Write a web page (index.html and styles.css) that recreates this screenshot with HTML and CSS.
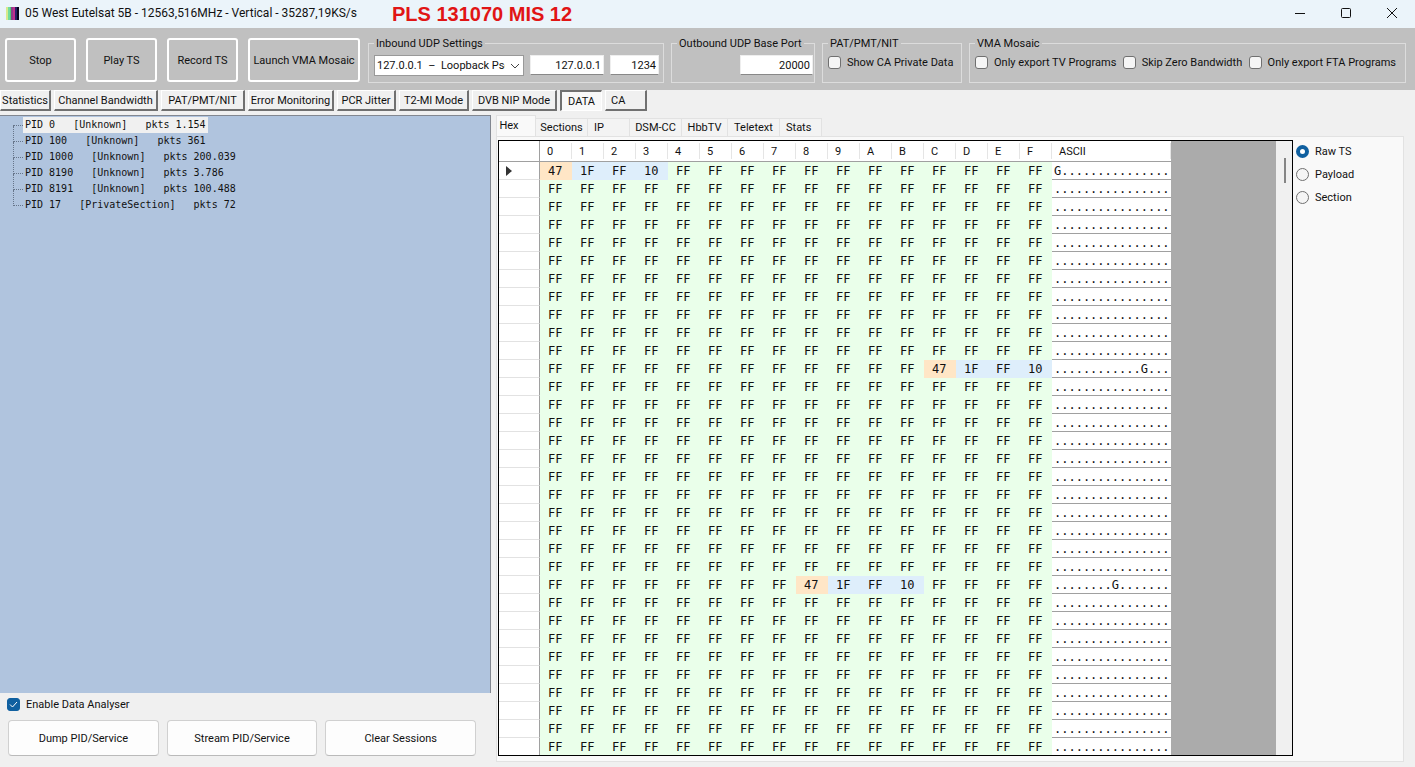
FILE: index.html
```html
<!DOCTYPE html>
<html lang="en">
<head>
<meta charset="utf-8">
<title>05 West Eutelsat 5B</title>
<link rel="stylesheet" href="styles.css">
</head>
<body>
<header class="titlebar">
  <svg class="app-icon" width="13" height="13" viewBox="0 0 13 13"><path fill="#d8ea8c" d="M0 0h2v13H0z"/><path fill="#72dc9c" d="M2 0h2v13H2z"/><path fill="#4fc878" d="M4 0h1v13H4z"/><path fill="#8a3f88" d="M5 0h2v13H5z"/><path fill="#c12c8e" d="M7 0h2v13H7z"/><path fill="#282066" d="M9 0h2v13H9z"/><path fill="#08041c" d="M11 0h2v13h-2z"/></svg>
  <span class="caption">05 West Eutelsat 5B - 12563,516MHz - Vertical - 35287,19KS/s</span>
  <strong class="note">PLS 131070 MIS 12</strong>
  <div class="window-buttons">
    <button type="button" aria-label="Minimize"><svg width="12" height="12" viewBox="0 0 12 12"><path d="M1 6.5h10"/></svg></button>
    <button type="button" aria-label="Maximize"><svg width="12" height="12" viewBox="0 0 12 12"><rect x="1.5" y="1.5" width="9" height="9" rx="1"/></svg></button>
    <button type="button" aria-label="Close"><svg width="12" height="12" viewBox="0 0 12 12"><path d="M1 1l10 10M11 1L1 11"/></svg></button>
  </div>
</header>

<div class="toolbar">
  <div class="actions">
    <button type="button">Stop</button>
    <button type="button">Play TS</button>
    <button type="button">Record TS</button>
    <button type="button" class="wide">Launch VMA Mosaic</button>
  </div>
  <fieldset class="inbound">
    <legend>Inbound UDP Settings</legend>
    <div class="fields">
      <select aria-label="Network interface"><option>127.0.0.1 &nbsp;–&nbsp; Loopback Pseudo-Interface</option></select>
      <input class="address" type="text" aria-label="Inbound address" value="127.0.0.1">
      <input class="port" type="text" aria-label="Inbound port" value="1234">
    </div>
  </fieldset>
  <fieldset class="outbound">
    <legend>Outbound UDP Base Port</legend>
    <div class="fields"><input class="base-port" type="text" aria-label="Outbound UDP base port" value="20000"></div>
  </fieldset>
  <fieldset class="tables">
    <legend>PAT/PMT/NIT</legend>
    <div class="checks"><label><input type="checkbox">Show CA Private Data</label></div>
  </fieldset>
  <fieldset class="mosaic">
    <legend>VMA Mosaic</legend>
    <div class="checks">
      <label><input type="checkbox">Only export TV Programs</label>
      <label><input type="checkbox">Skip Zero Bandwidth</label>
      <label><input type="checkbox">Only export FTA Programs</label>
    </div>
  </fieldset>
</div>

<nav class="modes">
  <button type="button" class="w-first">Statistics</button>
  <button type="button" class="w-channel">Channel Bandwidth</button>
  <button type="button" class="w-pat">PAT/PMT/NIT</button>
  <button type="button" class="w-error">Error Monitoring</button>
  <button type="button" class="w-pcr">PCR Jitter</button>
  <button type="button" class="w-t2">T2-MI Mode</button>
  <button type="button" class="w-dvb">DVB NIP Mode</button>
  <button type="button" class="w-small active">DATA</button>
  <button type="button" class="w-small left">CA</button>
</nav>

<main class="workspace">
  <section class="services">
    <ul class="tree">
      <li><span class="selected">PID 0   [Unknown]   pkts 1.154</span></li>
      <li><span>PID 100   [Unknown]   pkts 361</span></li>
      <li><span>PID 1000   [Unknown]   pkts 200.039</span></li>
      <li><span>PID 8190   [Unknown]   pkts 3.786</span></li>
      <li><span>PID 8191   [Unknown]   pkts 100.488</span></li>
      <li><span>PID 17   [PrivateSection]   pkts 72</span></li>
    </ul>
    <div class="service-footer">
      <label><input type="checkbox" checked>Enable Data Analyser</label>
      <div class="service-actions">
        <button type="button">Dump PID/Service</button>
        <button type="button">Stream PID/Service</button>
        <button type="button">Clear Sessions</button>
      </div>
    </div>
  </section>

  <section class="viewer">
    <nav class="views">
      <button type="button" class="v-hex active">Hex</button>
      <button type="button" class="v-wide">Sections</button>
      <button type="button" class="v-short">IP</button>
      <button type="button" class="v-wide">DSM-CC</button>
      <button type="button" class="v-mid">HbbTV</button>
      <button type="button" class="v-wide">Teletext</button>
      <button type="button" class="v-short">Stats</button>
    </nav>
    <div class="page">
      <div class="grid-box">
        <div class="grid-view">
          <table class="hex">
            <thead><tr id="hex-head"></tr></thead>
            <tbody id="hex-body"></tbody>
          </table>
        </div>
        <div class="scrollbar"><div class="thumb"></div></div>
      </div>
      <div class="sources">
        <label><input type="radio" name="source" checked>Raw TS</label>
        <label><input type="radio" name="source">Payload</label>
        <label><input type="radio" name="source">Section</label>
      </div>
    </div>
  </section>
</main>
<script src="app.js"></script>
</body>
</html>
```

FILE: styles.css
```css
*, *::before { box-sizing: border-box; }
body {
  margin: 0;
  height: 100vh;
  display: flex;
  flex-direction: column;
  overflow: hidden;
  background: #f0f0f0;
  color: #111;
  font: 11px/13px Roboto, "Liberation Sans", Arial, sans-serif;
}
button, input, select { font: inherit; color: inherit; margin: 0; }
button { padding: 0; white-space: nowrap; }

.titlebar {
  flex: none;
  height: 28px;
  display: flex;
  align-items: center;
  padding-left: 6px;
  background: #ebf4fa;
}
.app-icon { flex: none; margin: 0 6px 2px 0; }
.caption { width: 367px; padding-bottom: 2px; font-size: 12px; line-height: 16px; white-space: nowrap; }
.note { color: #e11515; font: bold 20px/24px "Liberation Sans", Arial, sans-serif; white-space: nowrap; }
.window-buttons { margin-left: auto; display: flex; padding-bottom: 2px; }
.window-buttons button {
  width: 46px;
  height: 24px;
  display: grid;
  place-items: center;
  border: 0;
  background: none;
}
.window-buttons svg { fill: none; stroke: #111; }

.toolbar {
  flex: none;
  height: 62px;
  display: flex;
  align-items: flex-start;
  padding: 9px 9px 0 5px;
  background: #c0c0c0;
}
.actions { display: flex; gap: 10px; padding-top: 1px; margin-right: 8px; }
.actions button {
  width: 71px;
  height: 44px;
  border: 2px solid #fff;
  border-radius: 3px;
  background: #c0c0c0;
}
.actions .wide { width: 112px; }
fieldset {
  height: 46px;
  min-width: 0;
  margin: 0 7px 0 0;
  padding: 0 4px 0 5px;
  border: 1px solid #dcdcdc;
}
legend { padding: 0 2px; white-space: nowrap; }
.inbound { width: 296px; }
.outbound { width: 144px; }
.tables { width: 140px; }
.mosaic { flex: 1; margin-right: 0; }
.fields { display: flex; justify-content: flex-end; gap: 6px; padding-top: 5px; }
.fields select {
  width: 150px;
  height: 21px;
  padding: 0 18px 0 2px;
  appearance: none;
  border: 1px solid #999;
  border-radius: 0;
  background: #fff url("data:image/svg+xml,%3Csvg xmlns='http://www.w3.org/2000/svg' width='10' height='6'%3E%3Cpath d='M1 1l4 4 4-4' fill='none' stroke='%23444'/%3E%3C/svg%3E") no-repeat right 3px center;
  text-overflow: clip;
}
.fields input {
  height: 20px;
  padding: 0 2px;
  border: 1px solid #eee;
  border-bottom-color: #888;
  background: #fff;
  text-align: right;
}
.address { width: 74px; }
.port { width: 49px; }
.base-port { width: 73px; margin-right: -3px; }
.checks { display: flex; justify-content: space-between; padding: 6px 5px 0 0; }
label { display: flex; align-items: center; gap: 6px; white-space: nowrap; }
input[type="checkbox"] {
  appearance: none;
  flex: none;
  width: 13px;
  height: 13px;
  border: 1px solid #707070;
  border-radius: 3px;
  background: #f5f5f5;
}
input[type="checkbox"]:checked {
  border-color: #1060a0;
  background: #1060a0 url("data:image/svg+xml,%3Csvg xmlns='http://www.w3.org/2000/svg' width='9' height='7'%3E%3Cpath d='M1 3.5l2.5 2.5L8 1' fill='none' stroke='white'/%3E%3C/svg%3E") no-repeat center;
}

.modes { flex: none; height: 25px; display: flex; gap: 3px; align-items: flex-start; }
.modes button {
  height: 21px;
  border: solid;
  border-width: 1px 2px 2px 1px;
  border-color: #fff #707070 #707070 #fff;
  background: #f0f0f0;
}
.modes .active { border-width: 2px 1px 1px 2px; border-color: #707070 #fff #fff #707070; background: #f8f8f8; }
.modes .left { text-align: left; padding-left: 5px; }
.w-first { width: 51px; }
.w-channel { width: 104px; }
.w-pat { width: 84px; }
.w-error { width: 86px; }
.w-pcr { width: 59px; }
.w-t2 { width: 70px; }
.w-dvb { width: 85px; }
.w-small { width: 42px; }

.workspace { flex: 1; min-height: 0; display: flex; }
.services { flex: none; width: 491px; display: flex; flex-direction: column; }
.tree {
  flex: 1;
  margin: 0;
  padding: 1px 0 0 13px;
  list-style: none;
  border: solid #828790;
  border-width: 1px 1px 0 0;
  background: #b0c4de;
  font: 10px/16px "DejaVu Sans Mono", monospace;
}
.tree li { display: flex; height: 16px; }
.tree li::before {
  content: "";
  width: 10px;
  height: 9px;
  border-bottom: 1px dotted #66758a;
}
.tree li + li::before { height: 16px; margin-top: -7px; border-left: 1px dotted #66758a; }
.tree span { padding: 0 2px; white-space: pre; }
.tree .selected { background: #f0f0f0; }
.service-footer { padding: 5px 15px 11px 7px; }
.service-actions { display: flex; gap: 8px; padding: 9px 0 0 1px; }
.service-actions button {
  flex: 1;
  height: 36px;
  border: 1px solid #d0d0d0;
  border-bottom-color: #bababa;
  border-radius: 4px;
  background: #fdfdfd;
}

.viewer { flex: 1; min-width: 0; display: flex; flex-direction: column; padding: 0 11px 5px 5px; }
.views { flex: none; height: 21px; display: flex; align-items: flex-end; }
.views button {
  height: 18px;
  border: solid #e2e2e2;
  border-width: 1px 1px 0 0;
  background: #f3f3f3;
}
.views .active { height: 21px; padding: 0 14px 2px 0; border-left-width: 1px; background: #f9f9f9; }
.v-hex { width: 40px; }
.v-wide { width: 52px; }
.v-mid { width: 46px; }
.views .v-short { width: 42px; text-align: left; padding-left: 6px; }
.page {
  flex: 1;
  min-height: 0;
  display: flex;
  padding: 3px 0 5px 1px;
  border: 1px solid #e2e2e2;
  background: #f9f9f9;
}
.grid-box { flex: 1; min-width: 0; display: flex; border: 1px solid #000; }
.grid-view { flex: 1; min-width: 0; overflow: hidden; background: #ababab; }
.scrollbar { flex: none; width: 16px; padding: 17px 6px 0 8px; background: #f0f0f0; }
.thumb { height: 25px; background: #858585; }
.sources { flex: none; width: 110px; display: flex; flex-direction: column; gap: 10px; padding: 5px 0 0 3px; }
input[type="radio"] {
  appearance: none;
  flex: none;
  width: 13px;
  height: 13px;
  border: 1px solid #707070;
  border-radius: 50%;
  background: #f5f5f5;
}
input[type="radio"]:checked { border: 4px solid #1060a0; background: #fff; }

.hex { table-layout: fixed; width: 672px; border-collapse: separate; border-spacing: 0; background: #fff; }
.hex th, .hex td { height: 18px; padding: 0; font-weight: normal; text-align: left; }
.hex thead th {
  height: 21px;
  padding-left: 7px;
  border-bottom: 1px solid #a0a0a0;
  background: linear-gradient(#e5e5e5, #e5e5e5) right 0 center / 1px 16px no-repeat;
}
.hex .row-head { width: 41px; border-right: 1px solid #a0a0a0; background: #fff; }
.hex tbody .row-head { border-bottom: 1px solid #e2e2e2; }
.hex .current { padding-left: 7px; }
.hex .current svg { display: block; fill: #333; }
.hex .byte { width: 32px; }
.hex .ascii { width: 119px; }
.hex td { font: 12px/16px "DejaVu Sans Mono", monospace; }
.hex td.byte { padding-left: 8px; background: #eaffea; }
.hex td.sync { background: #ffe6c6; }
.hex td.header { background: #deeefb; }
.hex td.ascii { padding-left: 2px; border-bottom: 1px solid #a0a0a0; }
```

FILE: app.js
```js
const ROWS = 33;
const PACKET = 188;
const HEADER = ["47", "1F", "FF", "10"];

const head = document.getElementById("hex-head");
head.innerHTML = '<th class="row-head"></th>' +
  [..."0123456789ABCDEF"].map((d) => `<th class="byte">${d}</th>`).join("") +
  '<th class="ascii">ASCII</th>';

let rows = "";
for (let r = 0; r < ROWS; r++) {
  let cells = "";
  let ascii = "";
  for (let c = 0; c < 16; c++) {
    const pos = (r * 16 + c) % PACKET;
    const kind = pos === 0 ? " sync" : pos < 4 ? " header" : "";
    cells += `<td class="byte${kind}">${HEADER[pos] || "FF"}</td>`;
    ascii += pos === 0 ? "G" : ".";
  }
  const marker = r === 0
    ? '<th class="row-head current"><svg width="6" height="10" viewBox="0 0 6 10"><path d="M0 0l6 5-6 5z"/></svg></th>'
    : '<th class="row-head"></th>';
  rows += `<tr>${marker}${cells}<td class="ascii">${ascii}</td></tr>`;
}
document.getElementById("hex-body").innerHTML = rows;
```
